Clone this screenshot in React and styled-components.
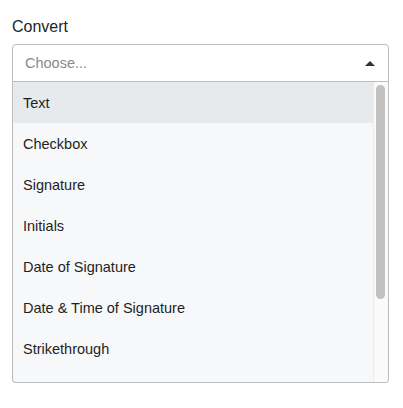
import React, { useState } from "react";
import styled, { createGlobalStyle } from "styled-components";

const options = [
  "Text",
  "Checkbox",
  "Signature",
  "Initials",
  "Date of Signature",
  "Date & Time of Signature",
  "Strikethrough",
];

function App() {
  const [active, setActive] = useState(0);

  return (
    <Page>
      <GlobalStyle />
      <Label>Convert</Label>
      <Field>
        <Control>
          <Placeholder>Choose...</Placeholder>
          <Arrow />
        </Control>
        <Menu>
          <List>
            {options.map((o, i) => (
              <Option key={o} active={i === active} onMouseEnter={() => setActive(i)}>
                {o}
              </Option>
            ))}
          </List>
          <Track>
            <Thumb />
          </Track>
        </Menu>
      </Field>
    </Page>
  );
}

export default App;

const GlobalStyle = createGlobalStyle`
  body {
    margin: 0;
    background: #ffffff;
    font-family: "Liberation Sans", Arial, sans-serif;
    color: #212529;
  }
`;

const Page = styled.div`
  padding: 17px 15px 0 12px;
  width: 403px;
  box-sizing: border-box;
`;

const Label = styled.div`
  font-size: 16px;
  line-height: 20px;
  color: #212529;
  margin-bottom: 7px;
`;

const Field = styled.div`
  width: 377px;
`;

const Control = styled.div`
  height: 38px;
  box-sizing: border-box;
  border: 1px solid #bcbcbc;
  border-radius: 4px 4px 0 0;
  display: flex;
  align-items: center;
  justify-content: space-between;
  padding: 0 12px 0 12px;
  background: #fff;
`;

const Placeholder = styled.span`
  font-size: 14.5px;
  color: #8a8a8a;
`;

const Arrow = styled.span`
  width: 0;
  height: 0;
  border-left: 5px solid transparent;
  border-right: 5px solid transparent;
  border-bottom: 5px solid #333;
  margin-right: 1px;
`;

const Menu = styled.div`
  height: 300px;
  display: flex;
  border: 1px solid #bcbcbc;
  border-top: none;
  border-radius: 0 0 4px 4px;
  background: #f7f8fa;
  overflow: hidden;
`;

const List = styled.div`
  flex: 1;
  overflow: hidden;
`;

const Track = styled.div`
  width: 15px;
  box-sizing: border-box;
  background: #fafafa;
  border-left: 1px solid #ececec;
  padding: 3px 3px 0 2px;
`;

const Thumb = styled.div`
  width: 9px;
  height: 214px;
  border-radius: 5px;
  background: #c1c1c1;
`;

const Option = styled.div`
  height: 41px;
  display: flex;
  align-items: center;
  padding-left: 10px;
  font-size: 14.5px;
  color: #1f1f1f;
  background: ${(props) => (props.active ? "#e7eaed" : "#f7f8fa")};
  cursor: pointer;
`;
